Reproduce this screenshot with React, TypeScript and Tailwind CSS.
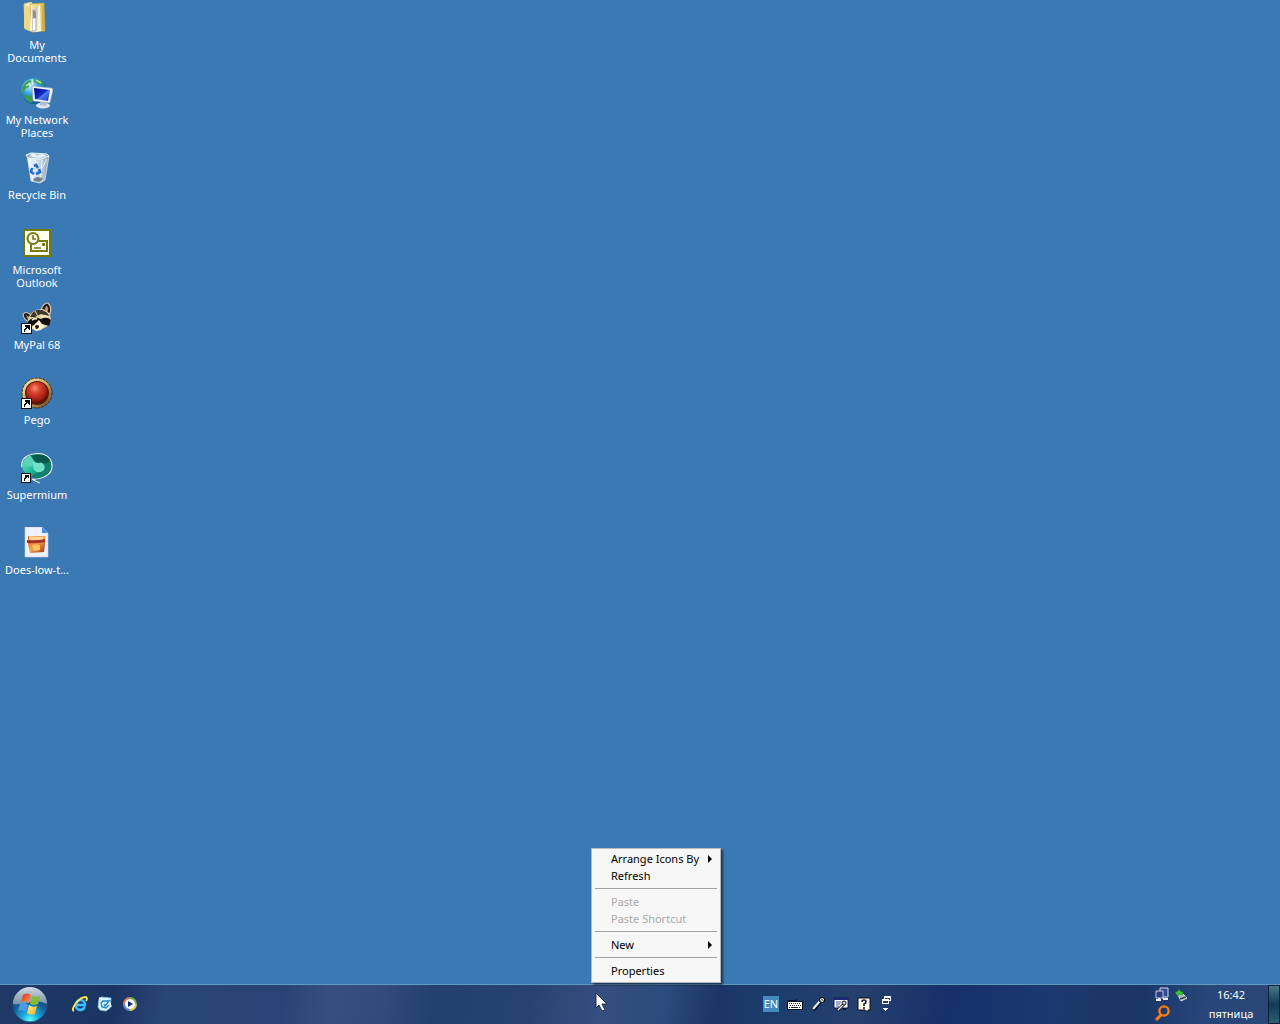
import React from 'react';

type IconProps = { className?: string };

const Shortcut = () => (
  <g shapeRendering="crispEdges">
    <path d="M0 21h11v11H0z" fill="#111" />
    <path d="M1 22h9v9H1z" fill="#fff" />
    <path d="M4 23h5v5H8v-1H7v-1H6v1H5v1H4v2H3v-3h1v-1h1v-1H4z" fill="#000" />
  </g>
);

const DocumentsIcon = () => (
  <svg width="32" height="32" viewBox="0 0 32 32" aria-hidden="true">
    <defs>
      <linearGradient id="docFolder" x1="0" x2="1">
        <stop offset="0" stopColor="#f9eeb0" />
        <stop offset="1" stopColor="#d9b950" />
      </linearGradient>
    </defs>
    <path d="M3 2l7-2 2 2v28l-8-3z" fill="#fff3bd" stroke="#d8bd6a" strokeWidth=".8" />
    <path d="M9 2l14-1 1 28-13 1z" fill="url(#docFolder)" stroke="#c3a248" strokeWidth=".7" />
    <path d="M10 5l6 2v23l-6-1z" fill="#f7f7f4" />
    <path d="M11 7q6-3 6 5l-1 17-5 1V12z" fill="#c9cac6" />
    <path d="M12 9q2-2 3 2v5h-3z" fill="#8f918f" />
    <path d="M13 17v11" stroke="#fff" strokeWidth="2.2" />
    <path d="M3 3l6 2v24l-6-3z" fill="#ecd887" />
    <path d="M17 5l2-3 1 27-4 1z" fill="#fcf5d4" />
    <path d="M21 3h2v25h-2z" fill="#c9a83e" opacity=".7" />
  </svg>
);

const NetworkIcon = () => (
  <svg width="32" height="32" viewBox="0 0 32 32" aria-hidden="true">
    <defs>
      <radialGradient id="netGlobe" cx=".35" cy=".3" r=".8">
        <stop offset="0" stopColor="#c3f0ff" />
        <stop offset=".4" stopColor="#35a1dc" />
        <stop offset="1" stopColor="#084780" />
      </radialGradient>
      <linearGradient id="netScreen" x1="0" x2="1" y2="1">
        <stop offset="0" stopColor="#00057d" />
        <stop offset=".5" stopColor="#1730c9" />
        <stop offset=".55" stopColor="#4e7cf0" />
        <stop offset="1" stopColor="#1634b8" />
      </linearGradient>
    </defs>
    <circle cx="13" cy="14" r="13" fill="url(#netGlobe)" />
    <path d="M2 9q3-5 7-6l1 2-3 2 1 3-4 2-1 4-2-1zM15 2q6 1 8 5l-4 1-3-2-3-1zM5 18l4 1 3 4-2 3q-5-2-7-7z" fill="#3fa04a" />
    <path d="M5 9l4-3M15 3l5 3M11 2l1 6" stroke="#d5f5c0" strokeWidth="1.2" />
    <ellipse cx="22" cy="28.5" rx="7" ry="3" fill="#dce4ec" />
    <path d="M19 24l7 1-1 4-6-1z" fill="#aebdce" />
    <path d="M11 9l20 2 1 2-3 13-17-2z" fill="#eef3f8" stroke="#8a9bb3" strokeWidth=".6" />
    <path d="M13 11l16 2-2 11-13-2z" fill="url(#netScreen)" />
  </svg>
);

const RecycleIcon = () => (
  <svg width="32" height="32" viewBox="0 0 32 32" aria-hidden="true">
    <defs>
      <linearGradient id="bin" x1="0" x2="1">
        <stop offset="0" stopColor="#f4fbff" />
        <stop offset=".55" stopColor="#c6d9e7" />
        <stop offset="1" stopColor="#8ca5b5" />
      </linearGradient>
    </defs>
    <path d="M6 3l22 1-4 24-5 3-9-2z" fill="url(#bin)" stroke="#dcecf5" strokeWidth=".7" />
    <path d="M5 3l5-2 16 1 2 2-8 3-13-1z" fill="#9bb4c4" stroke="#f4faff" />
    <path d="M9 3l3-2 4 2 5-1 5 2-7 2-8-1z" fill="#e6f0f5" />
    <path d="M8 8l4 20M21 8l-2 22M14 8l2 7M26 7l-5 9" stroke="#fff" strokeWidth=".8" />
    <path d="M13 14l2-1 2 3M11 16l-1 4 3 2M18 17l1 3-4 2" fill="none" stroke="#286cc6" strokeWidth="2.6" />
    <path d="M12 27l4-2 6 1-3 4-6-1z" fill="#777f80" />
  </svg>
);

const OutlookIcon = () => (
  <svg width="32" height="32" viewBox="0 0 32 32" aria-hidden="true">
    <path d="M2 2h28v28H2z" fill="#747900" />
    <path d="M4 4h24v24H4z" fill="#fffff4" />
    <path d="M10 14h16v10H10z" fill="#fffff4" stroke="#777b10" strokeWidth="2" />
    <path d="M13 21h7" stroke="#777b10" strokeWidth="1.6" />
    <path d="M21 16h3v3h-3z" fill="#777b10" />
    <circle cx="12" cy="11.5" r="5.5" fill="#fffff4" stroke="#777b10" strokeWidth="2" />
    <path d="M12 8v4h3" fill="none" stroke="#777b10" strokeWidth="1.6" />
  </svg>
);

const MyPalIcon = () => (
  <svg width="32" height="32" viewBox="0 0 32 32" aria-hidden="true">
    <path d="M20 8Q22 1 27 1q4 4 2 11zM10 13Q4 8 2 13q1 5 7 7z" fill="#241d17" stroke="#d7c59e" strokeWidth="1.2" />
    <path d="M24 8q0-4 2-4 2 2 0 7zM5 13l5 3-3 2z" fill="#b49c7a" />
    <path d="M7 17Q11 6 22 7q8 3 8 11-1 7-10 9-8 3-12-3z" fill="#e3d0a2" />
    <path d="M9 15Q13 6 21 8q6 2 7 6l-8-2-6 3z" fill="#40362a" />
    <path d="M7 20q4-6 10-4l3 1q6-3 10 1l-2 6-7-2-4 4-4-3-6 3z" fill="#110f0e" />
    <path d="M14 22l4-4 3 4 3 2-4 4-5 1-4-3z" fill="#fff2cf" />
    <path d="M14 24q2-2 4 0 0 3-3 3z" fill="#171311" />
    <path d="M11 18q3-2 5-1M20 15q4-2 7 0" stroke="#f6e8c4" strokeWidth="1.6" fill="none" />
    <path d="M14 9l3 5" stroke="#d7bd87" strokeWidth="1.2" />
    <Shortcut />
  </svg>
);

const PegoIcon = () => (
  <svg width="32" height="32" viewBox="0 0 32 32" aria-hidden="true">
    <defs>
      <radialGradient id="pego" cx=".4" cy=".3" r=".7">
        <stop offset="0" stopColor="#f58a70" />
        <stop offset=".35" stopColor="#d8402c" />
        <stop offset=".8" stopColor="#a11e14" />
        <stop offset="1" stopColor="#5b0c06" />
      </radialGradient>
      <linearGradient id="pegoRim" x1="0" y1="0" x2="1" y2="1">
        <stop offset="0" stopColor="#ffe9b0" />
        <stop offset=".55" stopColor="#c99d5a" />
        <stop offset="1" stopColor="#5a3616" />
      </linearGradient>
    </defs>
    <circle cx="16" cy="16" r="15" fill="url(#pegoRim)" stroke="#462e16" strokeWidth="1" strokeDasharray="3 1" />
    <circle cx="16" cy="16" r="12" fill="#522009" />
    <circle cx="16" cy="15.5" r="10.6" fill="url(#pego)" />
    <Shortcut />
  </svg>
);

const SupermiumIcon = () => (
  <svg width="34" height="33" viewBox="0 0 34 33" aria-hidden="true">
    <defs>
      <linearGradient id="superA" x1="0" x2="1" y2="1">
        <stop offset="0" stopColor="#83eed7" />
        <stop offset=".6" stopColor="#20b798" />
        <stop offset="1" stopColor="#087763" />
      </linearGradient>
    </defs>
    <path d="M1 15C-1 4 11-1 23 1q10 3 10 13c0 9-10 14-21 14l8 4" fill="#167b68" stroke="#fff" strokeWidth="1.1" />
    <path d="M1 12Q4 4 10 3l4 7q3 3 9 2 3 5-1 9-9 6-16 1-5-3-5-10z" fill="url(#superA)" />
    <path d="M2 10Q6 3 10 3l4 6-3 5-8 1z" fill="#5bd3b9" />
    <path d="M12 3q14-4 19 5-4 5-10 2-6 2-9-7z" fill="#0a594f" />
    <path d="M13 8q3 4 8 2 5 2 4 7-3 5-9 3-5-4-3-12z" fill="#6fe3c8" />
    <path d="M17 21q11-1 14-9 0 10-13 15l-6-3z" fill="#15806c" />
    <Shortcut />
  </svg>
);

const ImageFileIcon = () => (
  <svg width="32" height="32" viewBox="0 0 32 32" aria-hidden="true">
    <defs>
      <linearGradient id="bucket" x1="0" x2="1" y2="1">
        <stop offset="0" stopColor="#e65a25" />
        <stop offset=".5" stopColor="#f4a449" />
        <stop offset="1" stopColor="#a02c1c" />
      </linearGradient>
    </defs>
    <path d="M4 0h17l6 6v24H4z" fill="#eef1ff" stroke="#c4cbe0" strokeWidth=".6" />
    <path d="M21 0l6 6h-6z" fill="#478bed" />
    <path d="M7 9h17v8l-1 8-14 1-2-9z" fill="url(#bucket)" />
    <path d="M8 9l14 1v3l-12 1-2-2z" fill="#ffd296" />
    <path d="M6 13q10 1 18-1v3q-9 2-18 1z" fill="#a5302a" />
    <path d="M11 18h8v5l-6 1z" fill="#ffc15d" />
  </svg>
);

const desktopItems = [
  { lines: ['My', 'Documents'], Icon: DocumentsIcon },
  { lines: ['My Network', 'Places'], Icon: NetworkIcon },
  { lines: ['Recycle Bin'], Icon: RecycleIcon },
  { lines: ['Microsoft', 'Outlook'], Icon: OutlookIcon },
  { lines: ['MyPal 68'], Icon: MyPalIcon },
  { lines: ['Pego'], Icon: PegoIcon },
  { lines: ['Supermium'], Icon: SupermiumIcon },
  { lines: ['Does-low-t...'], Icon: ImageFileIcon },
];

function MenuItem({ label, disabled, submenu }: { label: string; disabled?: boolean; submenu?: boolean }) {
  return (
    <button
      type="button"
      role="menuitem"
      disabled={disabled}
      aria-haspopup={submenu ? 'menu' : undefined}
      className="flex h-[17px] w-full items-center justify-between pr-2 pl-[19px] text-left whitespace-nowrap text-black disabled:text-[#a9a9a9]"
    >
      <span>{label}</span>
      {submenu && (
        <svg width="4" height="8" viewBox="0 0 4 8" aria-hidden="true">
          <path d="M0 0l4 4-4 4z" />
        </svg>
      )}
    </button>
  );
}

const Separator = () => <div role="separator" className="mx-[3px] my-1 h-px bg-[#a0a0a0]" />;

function ContextMenu() {
  return (
    <div
      role="menu"
      className="absolute bottom-[41px] left-[591px] w-[130px] border border-[#b9b9b9] bg-[#f7f7f7] pt-px pb-[3px] shadow-[2px_2px_2px_rgba(0,0,0,0.55)]"
    >
      <MenuItem label="Arrange Icons By" submenu />
      <MenuItem label="Refresh" />
      <Separator />
      <MenuItem label="Paste" disabled />
      <MenuItem label="Paste Shortcut" disabled />
      <Separator />
      <MenuItem label="New" submenu />
      <Separator />
      <MenuItem label="Properties" />
    </div>
  );
}

const StartOrb = () => (
  <svg width="36" height="36" viewBox="0 0 36 36" aria-hidden="true">
    <defs>
      <radialGradient id="orb" cx=".5" cy=".95" r=".85">
        <stop offset="0" stopColor="#5fffff" />
        <stop offset=".3" stopColor="#18a9d8" />
        <stop offset=".65" stopColor="#145b96" />
        <stop offset="1" stopColor="#234c75" />
      </radialGradient>
      <linearGradient id="orbGloss" x2="0" y2="1">
        <stop offset="0" stopColor="#dce5eb" />
        <stop offset="1" stopColor="#8297a8" />
      </linearGradient>
      <linearGradient id="flagRed" x2="1" y2="1">
        <stop offset="0" stopColor="#d92e16" />
        <stop offset="1" stopColor="#ff9c55" />
      </linearGradient>
      <linearGradient id="flagYellow" x2="1" y2="1">
        <stop offset="0" stopColor="#fff3a0" />
        <stop offset="1" stopColor="#f4aa10" />
      </linearGradient>
    </defs>
    <circle cx="18" cy="18" r="17" fill="url(#orb)" stroke="#274e78" strokeWidth="1" />
    <path d="M1 17a17 17 0 0 1 34 0q-8-4-17-2-9 3-17 2z" fill="url(#orbGloss)" opacity=".92" />
    <path d="M11 8q4-3 8 0l-2 8q-4-3-8-1z" fill="url(#flagRed)" />
    <path d="M20 9q4 2 8 0l-2 8q-4 2-8 0z" fill="#83bd35" />
    <path d="M8 17q4-3 8 1l-2 7q-4-3-8-1z" fill="#4a9be5" />
    <path d="M17 18q4 3 8 1l-2 8q-4 2-8-1z" fill="url(#flagYellow)" />
  </svg>
);

const BrowserIcon = () => (
  <svg width="16" height="16" viewBox="0 0 16 16" aria-hidden="true">
    <path d="M13 11q-2 3-5 3-5-1-4-6 1-4 5-4 4 1 4 5H5" fill="none" stroke="#104c9a" strokeWidth="3.5" />
    <path d="M13 11q-2 3-5 3-5-1-4-6 1-4 5-4 4 1 4 5H5" fill="none" stroke="#42bdf5" strokeWidth="2.3" />
    <path d="M2 15Q-1 14 4 7q5-6 10-6 2 1 0 4" fill="none" stroke="#ffe84d" strokeWidth="1.8" />
  </svg>
);

const MailIcon = () => (
  <svg width="16" height="16" viewBox="0 0 16 16" aria-hidden="true">
    <path d="M4 1l10 1-1 10-4 3-6-1-2-3 1-8z" fill="#d9f5ff" stroke="#8cc4e8" strokeWidth=".8" />
    <path d="M12 5H6L4 7l1 4 4 1 3-3M7 8l1 2 5-6" fill="none" stroke="#2387c3" strokeWidth="1.3" />
    <path d="M2 2l3 1M13 7l1 4" stroke="#fff" strokeWidth="1.5" />
  </svg>
);

const PlayerIcon = () => (
  <svg width="16" height="16" viewBox="0 0 16 16" fill="none" aria-hidden="true">
    <circle cx="8" cy="8" r="5.5" fill="#f4f7ff" />
    <path d="M2 8a6 6 0 0 1 6-6" stroke="#e87a50" strokeWidth="2" />
    <path d="M8 2a6 6 0 0 1 6 6" stroke="#82aa53" strokeWidth="2" />
    <path d="M14 8a6 6 0 0 1-6 6" stroke="#e0c763" strokeWidth="2" />
    <path d="M8 14a6 6 0 0 1-6-6" stroke="#638bc7" strokeWidth="2" />
    <path d="M6 5l5 3-5 3z" fill="#172775" />
  </svg>
);

const KeyboardIcon = () => (
  <svg width="16" height="16" viewBox="0 0 16 16" aria-hidden="true" shapeRendering="crispEdges">
    <path d="M1 6V4h8V3" fill="none" stroke="#02102f" />
    <path d="M0 5h16v9H0z" fill="#071020" />
    <path d="M1 6h14v7H1z" fill="#fff" />
    <path d="M2 7h1v1H2zM4 7h1v1H4zM6 7h1v1H6zM8 7h1v1H8zM10 7h1v1h-1zM12 7h1v1h-1zM3 9h1v1H3zM5 9h1v1H5zM7 9h1v1H7zM9 9h1v1H9zM11 9h1v1h-1zM13 9h1v1h-1zM2 11h1v1H2zM4 11h7v1H4zM12 11h1v1h-1z" fill="#222" />
  </svg>
);

const MicIcon = () => (
  <svg width="16" height="16" viewBox="0 0 16 16" aria-hidden="true">
    <path d="M3 14l8-9" stroke="#040c1b" strokeWidth="4" />
    <path d="M3 13l7-8" stroke="#d9edf1" strokeWidth="2.2" />
    <circle cx="12" cy="4" r="2.7" fill="#7d9292" stroke="#111" />
    <path d="M10 3l3 3M12 2l2 2" stroke="#fff" strokeWidth=".8" />
  </svg>
);

const ToolsIcon = () => (
  <svg width="16" height="16" viewBox="0 0 16 16" aria-hidden="true">
    <path d="M1 2h14v10H1z" fill="#fff" stroke="#101958" />
    <path d="M1 2h14v2H1z" fill="#202779" />
    <path d="M3 6h5M3 8h4M3 10h3" stroke="#4e5681" />
    <path d="M5 14l6-6" stroke="#111" strokeWidth="3" />
    <path d="M5 14l6-6" stroke="#fff" strokeWidth="1.2" />
    <circle cx="11" cy="7" r="2" fill="#cfd6da" stroke="#111" />
    <path d="M10 13h3" stroke="#05070b" strokeWidth="1.5" />
  </svg>
);

const HelpIcon = () => (
  <svg width="16" height="16" viewBox="0 0 16 16" aria-hidden="true">
    <path d="M2 2h12v12h-2v2l-3-2H2z" fill="#fffde0" stroke="#090e1d" />
    <path d="M6 6q0-2 2-2t2 2q0 1-2 2v2M8 11v2" fill="none" stroke="#1c1a55" strokeWidth="1.7" />
  </svg>
);

const languageTools = [
  { label: 'Keyboard', Icon: KeyboardIcon },
  { label: 'Microphone', Icon: MicIcon },
  { label: 'Speech tools', Icon: ToolsIcon },
  { label: 'Help', Icon: HelpIcon },
];

const quickLaunch = [
  { label: 'Internet Explorer', Icon: BrowserIcon },
  { label: 'Outlook Express', Icon: MailIcon },
  { label: 'Media Player', Icon: PlayerIcon },
];

const NetworkTray = () => (
  <svg width="16" height="16" viewBox="0 0 16 16" aria-hidden="true">
    <path d="M6 1h8v9H6z" fill="#334a8d" stroke="#d4d9ed" />
    <path d="M2 4h7v7H2z" fill="#2b3d80" stroke="#c3cae8" />
    <path d="M2 13h5M9 12h5M5 11v2" stroke="#e5e9f6" strokeWidth="2" />
  </svg>
);

const SafeRemoveIcon = () => (
  <svg width="16" height="16" viewBox="0 0 16 16" aria-hidden="true">
    <path d="M5 8l5-1 4 4-6 3z" fill="#aab7b6" stroke="#dce5df" />
    <path d="M7 12l6-2" stroke="#34454b" strokeWidth="1.5" />
    <path d="M2 6l5-4v2l3 1-1 3-3-1-1 2z" fill="#39c82b" stroke="#14701c" strokeWidth=".6" />
  </svg>
);

const SearchTray = () => (
  <svg width="16" height="16" viewBox="0 0 16 16" aria-hidden="true">
    <circle cx="10" cy="6" r="4.6" fill="none" stroke="#ff7d0c" strokeWidth="2.3" />
    <path d="M7 10l-5 5" stroke="#ff7d0c" strokeWidth="3" />
  </svg>
);

const Cursor = ({ className }: IconProps) => (
  <svg className={className} width="13" height="20" viewBox="0 0 13 20" aria-hidden="true">
    <path d="M1 1v15l3-3 3 6 3-1-3-6h5z" fill="#fff" stroke="#17243e" strokeWidth=".9" />
  </svg>
);

function Taskbar() {
  return (
    <footer className="flex h-10 shrink-0 items-center border-t border-[#629abe] bg-[linear-gradient(100deg,#203a68_0%,#1a3462_9%,#294678_13%,#284377_22%,#344f80_26%,#304b7c_30%,#22406d_34%,#26436f_41%,#344f80_47%,#2b4a7d_52%,#1c3568_56%,#1b3c6e_60%,#25406d_67%,#15306a_74%,#1b3971_82%,#1b3765_86%,#1a3669_89%,#27467a_94%,#2b4778_100%)] text-white">
      <button type="button" aria-label="Start" className="ml-3 shrink-0">
        <StartOrb />
      </button>
      <nav aria-label="Quick launch" className="mb-[2px] ml-6 flex gap-[9px]">
        {quickLaunch.map(({ label, Icon }) => (
          <button key={label} type="button" aria-label={label}>
            <Icon />
          </button>
        ))}
      </nav>
      <div className="mb-[2px] ml-auto flex items-center">
        <button type="button" className="flex h-4 w-4 items-center justify-center bg-[#4689bd]">
          EN
        </button>
        <div className="ml-2 flex gap-[7px]">
          {languageTools.map(({ label, Icon }) => (
            <button key={label} type="button" aria-label={label}>
              <Icon />
            </button>
          ))}
        </div>
        <button type="button" aria-label="Language bar options" className="ml-[10px]">
          <svg width="9" height="16" viewBox="0 0 9 16" aria-hidden="true" shapeRendering="crispEdges">
            <path d="M2 0h7v5H7V4h1V2H3v1H2z" fill="#fff" />
            <path d="M0 3h7v5H0zM1 5v2h5V5z" fill="#fff" fillRule="evenodd" />
            <path d="M1 12h5v1H5v1H4v1H3v-1H2v-1H1z" fill="#fff" />
          </svg>
        </button>
      </div>
      <div className="mb-[2px] ml-[263px] grid w-9 grid-cols-2 gap-[2px]">
        <button type="button" aria-label="Network">
          <NetworkTray />
        </button>
        <button type="button" aria-label="Safely remove hardware">
          <SafeRemoveIcon />
        </button>
        <button type="button" aria-label="Search">
          <SearchTray />
        </button>
      </div>
      <button type="button" className="mb-[2px] flex w-[78px] flex-col items-center pl-1 leading-[19px]">
        <span>16:42</span>
        <span>пятница</span>
      </button>
      <button
        type="button"
        aria-label="Show desktop"
        className="h-full w-3 border border-[#0b1f38] bg-linear-to-b from-[#48798a] via-[#123954] to-[#2b6074]"
      />
    </footer>
  );
}

export default function App() {
  return (
    <div className="relative flex h-screen w-full flex-col overflow-hidden bg-[#3b79b5] font-['Noto_Sans','Open_Sans',sans-serif] text-[11px] leading-[13px]">
      <main className="flex-1">
        <ul className="flex w-[74px] flex-col">
          {desktopItems.map(({ lines, Icon }) => (
            <li key={lines.join(' ')} className="h-[75px]">
              <button type="button" className="flex w-full flex-col items-center pt-[2px] text-white">
                <span className="flex h-8 w-8 justify-center">
                  <Icon />
                </span>
                <span className="mt-1 whitespace-nowrap">
                  {lines.map((line) => (
                    <span key={line} className="block">
                      {line}
                    </span>
                  ))}
                </span>
              </button>
            </li>
          ))}
        </ul>
      </main>
      <Taskbar />
      <ContextMenu />
      <Cursor className="absolute bottom-3 left-[595px]" />
    </div>
  );
}
